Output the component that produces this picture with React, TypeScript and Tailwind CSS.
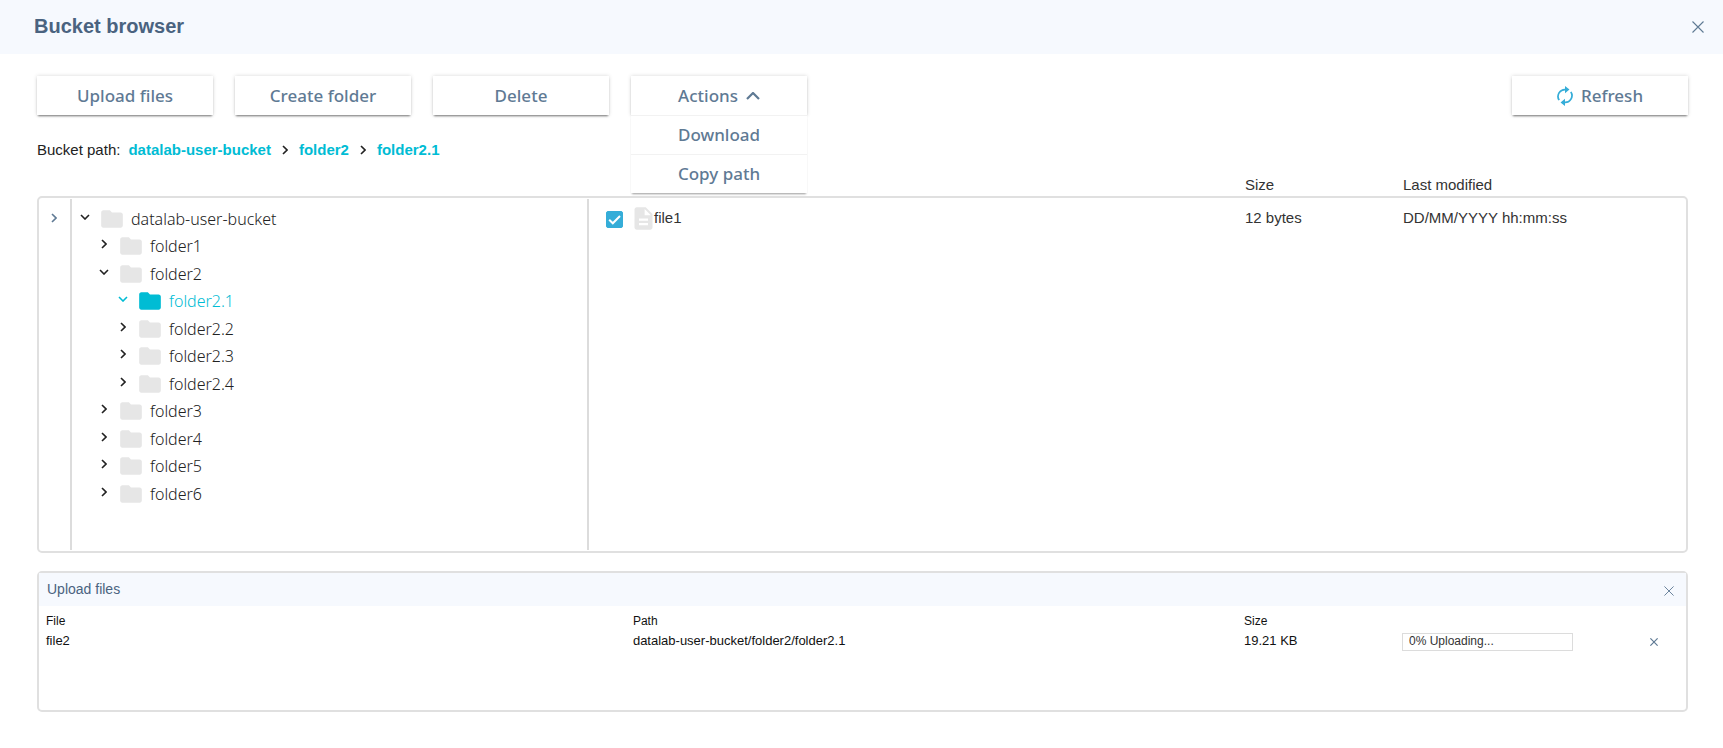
import { useState } from "react";
import type { ButtonHTMLAttributes, ReactNode } from "react";
import { MdDescription, MdFolder } from "react-icons/md";

type Direction = "up" | "down" | "right";

const chevronPoints: Record<Direction, string> = {
  up: "1,7 7,1 13,7",
  down: "1,1 5,5 9,1",
  right: "1,1 5,5 1,9",
};

const chevronBoxes: Record<Direction, string> = {
  up: "0 0 14 8",
  down: "0 0 10 6",
  right: "0 0 6 10",
};

const chevronSizes: Record<Direction, string> = {
  up: "h-2 w-3.5",
  down: "h-1.5 w-2.5",
  right: "h-2.5 w-1.5",
};

function Chevron({ direction }: { direction: Direction }) {
  return (
    <svg viewBox={chevronBoxes[direction]} className={chevronSizes[direction]} fill="none" stroke="currentColor" strokeWidth={direction === "up" ? 2.2 : 1.6} aria-hidden="true">
      <polyline points={chevronPoints[direction]} />
    </svg>
  );
}

function Cross({ className, weight = 1.1 }: { className: string; weight?: number }) {
  return (
    <svg viewBox="0 0 12 12" className={className} fill="none" stroke="currentColor" strokeWidth={weight} aria-hidden="true">
      <path d="M0.5 0.5 11.5 11.5M11.5 0.5 0.5 11.5" />
    </svg>
  );
}

function RefreshIcon() {
  return (
    <svg viewBox="0 0 46 58" className="h-5 w-4 text-[#35add8]" aria-hidden="true">
      <g fill="none" stroke="currentColor" strokeWidth="5">
        <path d="M26 10.5A20 20 0 0 0 6 41" />
        <path d="M40 17A20 20 0 0 1 20 47.5" />
      </g>
      <path fill="currentColor" d="M23 0 36 10.5 23 21ZM23 37 10 47.5 23 58Z" />
    </svg>
  );
}

function ToolbarButton({ children, ...rest }: { children: ReactNode } & ButtonHTMLAttributes<HTMLButtonElement>) {
  return (
    <button
      type="button"
      className="flex h-[39px] w-44 items-center justify-center gap-2 bg-white font-['Noto_Sans',sans-serif] text-[17px] font-medium text-[#5f7a94] shadow-[0_2px_2px_-1px_rgba(0,0,0,0.5),0_0_4px_rgba(0,0,0,0.16)]"
      {...rest}
    >
      {children}
    </button>
  );
}

function ToolbarMenuItem({ children }: { children: ReactNode }) {
  return (
    <button
      type="button"
      className="flex h-[39px] w-44 items-center justify-center border-t border-[#f2f2f2] bg-white font-['Noto_Sans',sans-serif] text-[17px] font-medium text-[#5f7a94]"
    >
      {children}
    </button>
  );
}

interface TreeNode {
  name: string;
  level: 0 | 1 | 2;
  open?: boolean;
}

const tree: TreeNode[] = [
  { name: "datalab-user-bucket", level: 0, open: true },
  { name: "folder1", level: 1 },
  { name: "folder2", level: 1, open: true },
  { name: "folder2.1", level: 2, open: true },
  { name: "folder2.2", level: 2 },
  { name: "folder2.3", level: 2 },
  { name: "folder2.4", level: 2 },
  { name: "folder3", level: 1 },
  { name: "folder4", level: 1 },
  { name: "folder5", level: 1 },
  { name: "folder6", level: 1 },
];

const indents = ["pl-1.5", "pl-[25px]", "pl-11"];

function FolderTree() {
  const [selected, setSelected] = useState("folder2.1");
  return (
    <ul className="pt-1.5">
      {tree.map((node) => (
        <li key={node.name} className={`flex odd:h-[27px] even:h-7 ${indents[node.level]}`}>
          <button
            type="button"
            onClick={() => setSelected(node.name)}
            className={`flex h-7 items-center ${node.name === selected ? "text-[#00bcd4]" : "text-[#222]"}`}
          >
            <span className="flex w-3.5 justify-center pb-1">
              <Chevron direction={node.open ? "down" : "right"} />
            </span>
            <MdFolder size={26} className={`ml-[7px] ${node.name === selected ? "" : "text-[#e6e6e6]"}`} aria-hidden="true" />
            <span className="ml-1.5 font-['Noto_Sans',sans-serif] text-base leading-7 font-light">{node.name}</span>
          </button>
        </li>
      ))}
    </ul>
  );
}

function FileTable() {
  return (
    <table className="-mt-7 w-full table-fixed text-left text-[15px] text-[#333]">
      <colgroup>
        <col />
        <col className="w-[158px]" />
        <col className="w-[283px]" />
      </colgroup>
      <thead>
        <tr className="h-7">
          <th aria-label="Name" />
          <th className="font-normal">Size</th>
          <th className="font-normal">Last modified</th>
        </tr>
      </thead>
      <tbody>
        <tr className="h-[38px]">
          <td className="pl-[17px]">
            <label className="flex items-center">
              <span className="mt-0.5 grid">
                <input type="checkbox" defaultChecked className="peer col-start-1 row-start-1 size-[17px] appearance-none rounded-xs border border-[#35add8] checked:bg-[#35add8]" />
                <svg viewBox="0 0 17 17" className="pointer-events-none invisible col-start-1 row-start-1 size-[17px] peer-checked:visible" fill="none" stroke="#fff" strokeWidth="2" aria-hidden="true">
                  <path d="M3.2 8.8 6.8 12.3 14 5" />
                </svg>
              </span>
              <MdDescription size={27} className="ml-[7px] text-[#e6e6e6]" aria-hidden="true" />
              <span className="-ml-[3px]">file1</span>
            </label>
          </td>
          <td>12 bytes</td>
          <td>DD/MM/YYYY hh:mm:ss</td>
        </tr>
      </tbody>
    </table>
  );
}

function UploadPanel() {
  return (
    <section className="mt-[18px] h-[141px] rounded-[5px] border-2 border-[#e0e0e0]" aria-labelledby="upload-title">
      <header className="flex h-[33px] items-center justify-between bg-[#f6f9fe] pr-3 pl-2 text-[#5f7a94]">
        <h2 id="upload-title" className="pb-0.5 text-sm text-[#4a6380]">Upload files</h2>
        <button type="button" aria-label="Close upload list" className="pt-0.5">
          <Cross className="size-2.5" />
        </button>
      </header>
      <table className="mt-[5px] w-full table-fixed text-left text-[13px] text-[#111]">
        <colgroup>
          <col className="w-[36%]" />
          <col />
          <col className="w-[158px]" />
          <col className="w-[200px]" />
          <col className="w-[84px]" />
        </colgroup>
        <thead>
          <tr className="h-5 text-xs">
            <th className="pl-[7px] font-normal">File</th>
            <th className="pl-px font-normal">Path</th>
            <th className="font-normal">Size</th>
            <th aria-label="Progress" />
            <th aria-label="Cancel" />
          </tr>
        </thead>
        <tbody>
          <tr className="h-5">
            <td className="pl-[7px]">file2</td>
            <td className="pl-px">datalab-user-bucket/folder2/folder2.1</td>
            <td>19.21 KB</td>
            <td className="pt-0.5">
              <div role="progressbar" aria-label="file2 upload" aria-valuenow={0} className="h-[18px] w-[171px] border border-[#dcdcdc] pl-1.5 text-xs leading-[14px] text-[#333]">
                0% Uploading...
              </div>
            </td>
            <td className="pt-0.5 pl-12">
              <button type="button" aria-label="Cancel upload of file2" className="block text-[#5f7a94]">
                <Cross className="size-2" weight={1.8} />
              </button>
            </td>
          </tr>
        </tbody>
      </table>
    </section>
  );
}

export default function App() {
  const [menuOpen, setMenuOpen] = useState(true);
  return (
    <div className="min-h-screen bg-white font-['Liberation_Sans',Arial,sans-serif] text-[#222]">
      <header className="flex h-[54px] items-center justify-between bg-[#f6f9fe] pr-[19px] pl-[34px] text-[#5f7a94]">
        <h1 className="pb-0.5 text-xl font-bold text-[#4a6380]">Bucket browser</h1>
        <button type="button" aria-label="Close">
          <Cross className="size-3" />
        </button>
      </header>

      <main className="pt-[22px] pr-[35px] pl-[37px]">
        <div className="flex gap-[22px]">
          <ToolbarButton>Upload files</ToolbarButton>
          <ToolbarButton>Create folder</ToolbarButton>
          <ToolbarButton>Delete</ToolbarButton>
          <div className="relative">
            <ToolbarButton aria-expanded={menuOpen} onClick={() => setMenuOpen(!menuOpen)}>
              Actions
              <Chevron direction={menuOpen ? "up" : "down"} />
            </ToolbarButton>
            {menuOpen && (
              <div className="absolute top-full left-0 z-10 shadow-[0_2px_2px_-1px_rgba(0,0,0,0.4)]">
                <ToolbarMenuItem>Download</ToolbarMenuItem>
                <ToolbarMenuItem>Copy path</ToolbarMenuItem>
              </div>
            )}
          </div>
          <div className="ml-auto">
            <ToolbarButton>
              <RefreshIcon />
              Refresh
            </ToolbarButton>
          </div>
        </div>

        <nav aria-label="Bucket path" className="mt-[23px] flex h-6 items-center text-[15px]">
          <span>Bucket path:</span>
          <a href="#bucket" className="ml-2 font-bold text-[#00bcd4]">datalab-user-bucket</a>
          <span className="mx-[11px]"><Chevron direction="right" /></span>
          <a href="#folder2" className="font-bold text-[#00bcd4]">folder2</a>
          <span className="mx-[11px]"><Chevron direction="right" /></span>
          <a href="#folder2.1" className="font-bold text-[#00bcd4]">folder2.1</a>
        </nav>

        <section className="mt-[34px] flex h-[357px] rounded-[5px] border-2 border-[#e0e0e0] py-px" aria-label="Bucket contents">
          <div className="w-[33px] shrink-0 border-r-2 border-[#dcdcdc]">
            <button type="button" aria-label="Expand panel" className="flex w-full justify-center pt-3.5 pr-0.5 text-[#5f7a94]">
              <Chevron direction="right" />
            </button>
          </div>
          <div className="w-[517px] shrink-0 border-r-2 border-[#dcdcdc]">
            <FolderTree />
          </div>
          <div className="min-w-0 flex-1">
            <FileTable />
          </div>
        </section>

        <UploadPanel />
      </main>
    </div>
  );
}
